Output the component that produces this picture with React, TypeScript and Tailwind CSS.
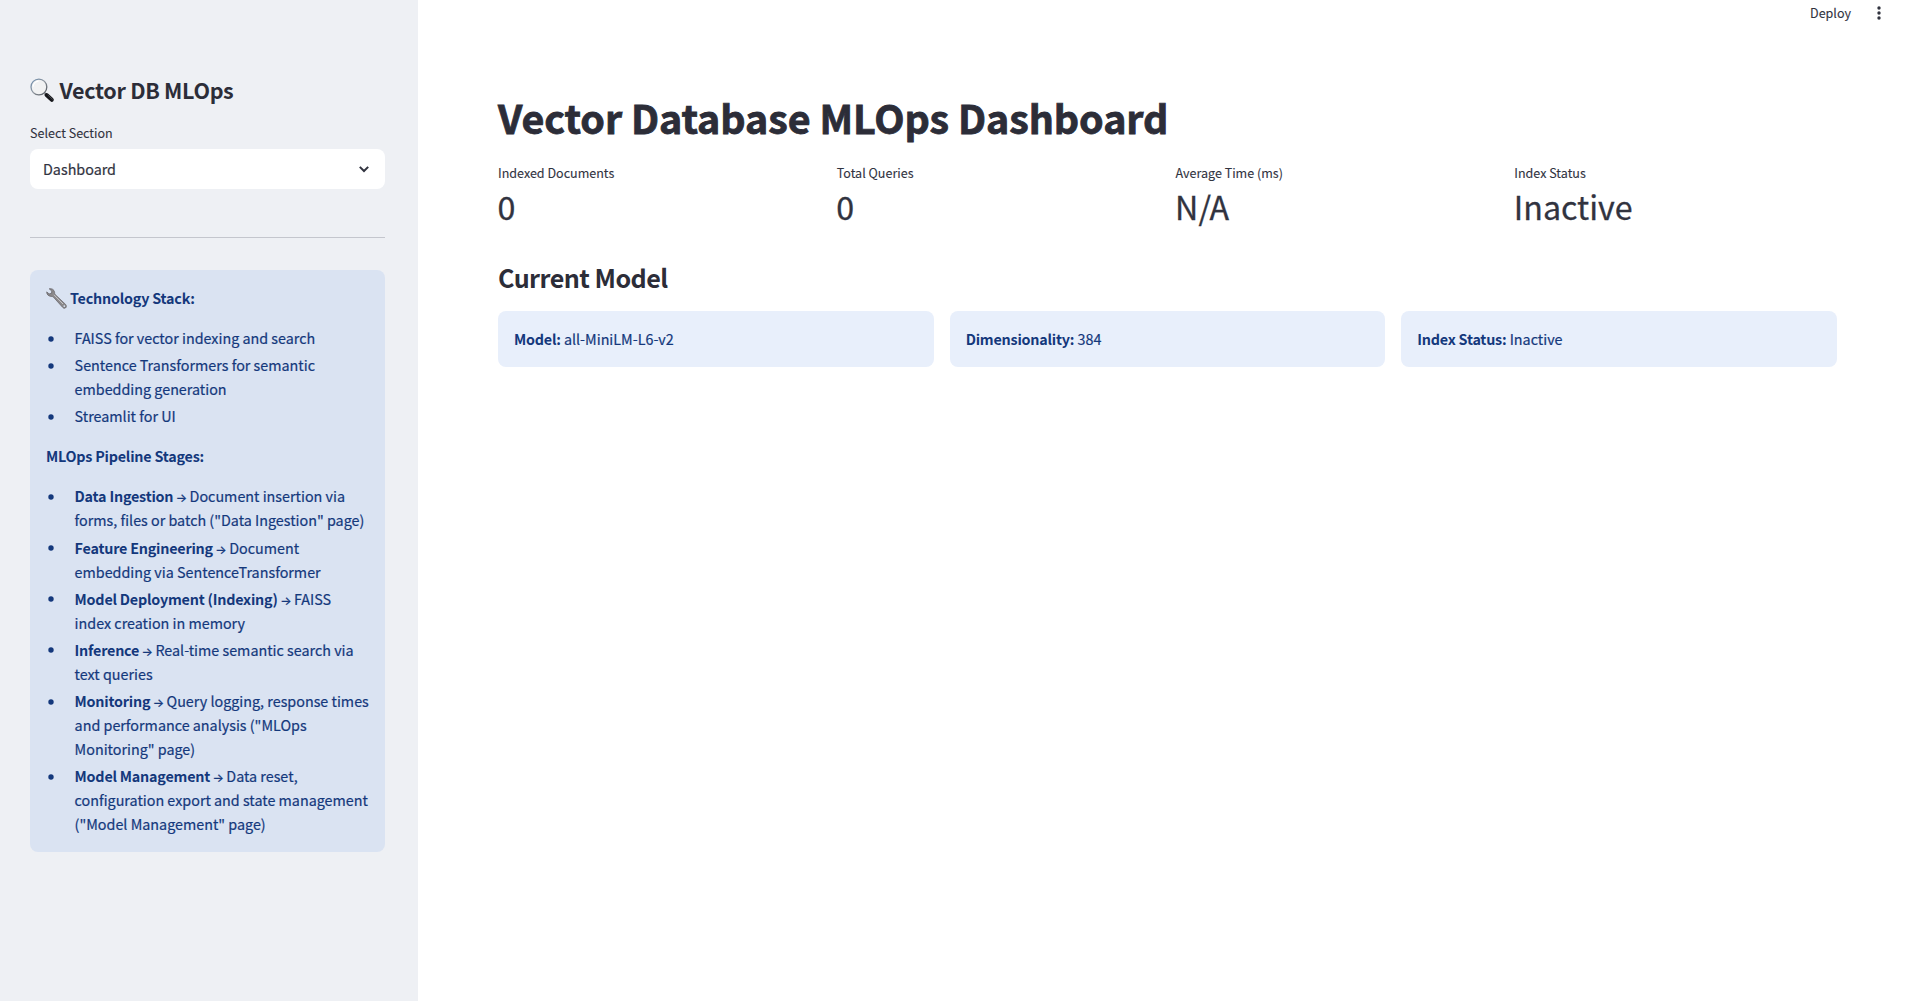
import type { ReactNode } from "react";

const MagnifierIcon = () => (
  <svg width="25" height="25" viewBox="0 0 25 25" className="shrink-0">
    <defs>
      <linearGradient id="rim" x1="0" y1="0" x2="1" y2="1">
        <stop offset="0" stopColor="#6f8fb0" />
        <stop offset="0.5" stopColor="#8d949c" />
        <stop offset="1" stopColor="#4c5157" />
      </linearGradient>
    </defs>
    <path d="M14.6 15.2L17 17.4" stroke="#8a8d92" strokeWidth="2.4" />
    <path d="M16.6 17L21.8 21.8" stroke="#17181c" strokeWidth="4" strokeLinecap="round" />
    <path d="M18 17.2L22.4 21.2" stroke="#55585f" strokeWidth="0.8" strokeLinecap="round" />
    <circle cx="8.9" cy="9" r="7.9" fill="#f1f2f3" stroke="url(#rim)" strokeWidth="1.3" />
    <path d="M3.2 8.6A5.8 5.8 0 0 1 8.6 3.2" stroke="#ffffff" strokeWidth="1.2" fill="none" />
  </svg>
);

const WrenchIcon = () => (
  <svg width="21" height="21" viewBox="0 0 21 21" className="shrink-0">
    <path
      d="M3.2 0.8C5.6 0.2 8.4 1.6 8.6 4.4C8.7 5.4 8.6 5.9 9.2 6.6L19.6 16.4C20.8 17.8 20.4 19.4 19.4 20C18.4 20.5 17.3 20.2 16.6 19.3L7.4 9.1C6.7 8.4 6 8.5 5.2 8.4C2.6 8.3 0.6 6.4 0.7 3.9L3.1 5.9L5.5 5.3L5.8 3.1Z"
      fill="#8b898b"
      stroke="#5f5c60"
      strokeWidth="0.7"
    />
    <path d="M8 6.8L17 16" stroke="#c9c8ca" strokeWidth="1" />
    <circle cx="18.3" cy="18.1" r="0.9" fill="#dae3f2" />
  </svg>
);

const Arrow = () => (
  <span className="inline-flex w-[9.8px] justify-center font-['Inter'] text-[12px] leading-none font-medium">→</span>
);

const stages: { name: string; lines: string[] }[] = [
  { name: "Data Ingestion", lines: ["Document insertion via", 'forms, files or batch ("Data Ingestion" page)'] },
  { name: "Feature Engineering", lines: ["Document", "embedding via SentenceTransformer"] },
  { name: "Model Deployment (Indexing)", lines: ["FAISS", "index creation in memory"] },
  { name: "Inference", lines: ["Real-time semantic search via", "text queries"] },
  { name: "Monitoring", lines: ["Query logging, response times", 'and performance analysis ("MLOps', 'Monitoring" page)'] },
  { name: "Model Management", lines: ["Data reset,", "configuration export and state management", '("Model Management" page)'] },
];

const metrics = [
  ["Indexed Documents", "0"],
  ["Total Queries", "0"],
  ["Average Time (ms)", "N/A"],
  ["Index Status", "Inactive"],
];

const cards = [
  ["Model:", "all-MiniLM-L6-v2"],
  ["Dimensionality:", "384"],
  ["Index Status:", "Inactive"],
];

const Strong = ({ children }: { children: ReactNode }) => (
  <strong className="font-bold tracking-[-0.21px] [-webkit-text-stroke:0px]">{children}</strong>
);

const Item = ({ children }: { children: ReactNode }) => (
  <li className="flex whitespace-nowrap">
    <svg width="6" height="6" viewBox="0 0 6 6" className="mt-[9.5px] mr-[20.6px] ml-[2px] shrink-0" fill="#14387c">
      <circle cx="3" cy="3" r="2.7" />
    </svg>
    <div>{children}</div>
  </li>
);

export default function App() {
  return (
    <div className="flex h-[1001px] w-full overflow-hidden bg-white font-['Noto_Sans_CJK_SC','Noto_Sans',sans-serif] text-[14.33px] leading-6 text-[#31333f] [-webkit-text-stroke:0.2px]">
      <aside className="w-[418px] shrink-0 bg-[#eef0f4] pt-[74px] pr-[33px] pl-[30px]">
        <h2 className="flex h-8 items-center text-[21.5px] leading-8 font-bold tracking-[-0.31px] whitespace-nowrap text-[#2c2d38] [-webkit-text-stroke:0px]">
          <MagnifierIcon />
          <span className="ml-[4.5px]">Vector DB MLOps</span>
        </h2>
        <label className="mt-[15px] block text-[12.54px] leading-6 [-webkit-text-stroke:0.1px]">Select Section</label>
        <button className="mt-1 flex h-10 w-full items-center justify-between rounded-lg bg-white pr-4 pl-[13px]">
          <span>Dashboard</span>
          <svg width="10" height="7" viewBox="0 0 10 7" fill="none" stroke="#31333f" strokeWidth="2">
            <path d="M0.8 0.9L5 5L9.2 0.9" />
          </svg>
        </button>
        <hr className="mt-12 border-t border-[#c4c6cd]" />
        <section className="mt-8 flex h-[582px] flex-col gap-4 rounded-lg bg-[#dae3f2] p-4 text-[#14387c]">
          <p className="flex items-center">
            <WrenchIcon />
            <span className="ml-[3px]">
              <Strong>Technology Stack:</Strong>
            </span>
          </p>
          <ul className="flex flex-col gap-[3.2px]">
            <Item>FAISS for vector indexing and search</Item>
            <Item>
              Sentence Transformers for semantic
              <br />
              embedding generation
            </Item>
            <Item>Streamlit for UI</Item>
          </ul>
          <p>
            <Strong>MLOps Pipeline Stages:</Strong>
          </p>
          <ul className="flex flex-col gap-[3.2px]">
            {stages.map((s) => (
              <Item key={s.name}>
                <Strong>{s.name}</Strong> <Arrow /> {s.lines[0]}
                {s.lines.slice(1).map((l) => (
                  <span key={l} className="block">
                    {l}
                  </span>
                ))}
              </Item>
            ))}
          </ul>
        </section>
      </aside>
      <div className="flex min-w-0 flex-1 flex-col">
        <header className="flex h-[26px] items-center justify-end pr-[26px] text-[12.54px] [-webkit-text-stroke:0.1px]">
          <span>Deploy</span>
          <svg width="4" height="14" viewBox="0 0 4 14" fill="#31333f" className="ml-[26px]">
            <circle cx="2" cy="2" r="1.7" />
            <circle cx="2" cy="7" r="1.7" />
            <circle cx="2" cy="12" r="1.7" />
          </svg>
        </header>
        <main className="flex flex-col pt-16 pr-[70px] pl-20">
          <h1 className="text-[39.4px] leading-[53px] font-bold tracking-[-0.06px] text-[#2c2d38] [-webkit-text-stroke:0.8px]">
            Vector Database MLOps Dashboard
          </h1>
          <div className="mt-[18px] grid grid-cols-4 gap-4">
            {metrics.map(([label, value]) => (
              <div key={label}>
                <div className="text-[12.54px] leading-6 [-webkit-text-stroke:0.1px]">{label}</div>
                <div className="-ml-[0.4px] text-[32.2px] leading-[43px] [-webkit-text-stroke:0.3px]">{value}</div>
              </div>
            ))}
          </div>
          <h2 className="mt-8 text-[25.1px] leading-[34px] font-bold tracking-[-0.52px] text-[#2c2d38] [-webkit-text-stroke:0px]">
            Current Model
          </h2>
          <div className="mt-[17px] grid grid-cols-3 gap-4">
            {cards.map(([name, value]) => (
              <div key={name} className="h-14 rounded-lg bg-[#e8effb] p-4 text-[#14387c]">
                <Strong>{name}</Strong> {value}
              </div>
            ))}
          </div>
        </main>
      </div>
    </div>
  );
}
